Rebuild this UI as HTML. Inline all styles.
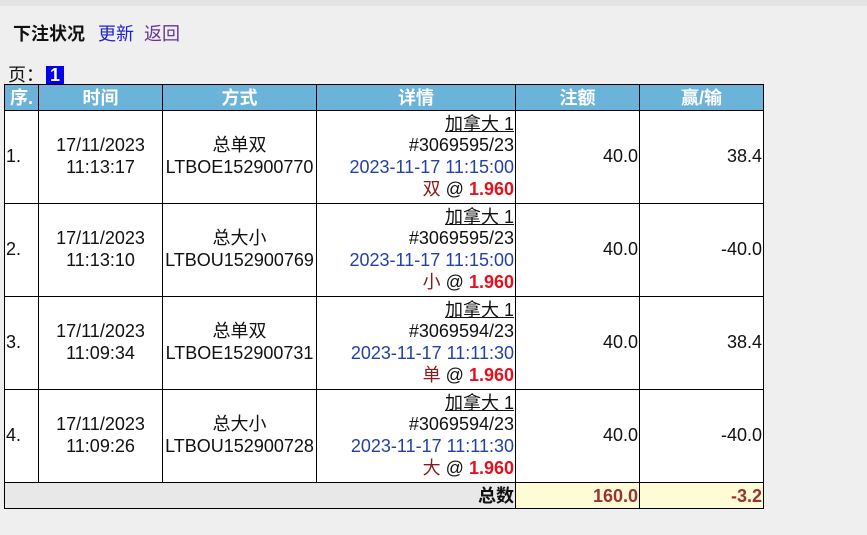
<!DOCTYPE html>
<html><head><meta charset="utf-8"><style>
body{margin:0;background:#efefef;font-family:"Liberation Sans","Noto Sans CJK SC",sans-serif;font-size:18px;color:#111;width:867px;height:535px;overflow:hidden;position:relative}
.top{position:absolute;left:0;top:0;width:867px;height:6px;background:#e4e4e4}
.title{position:absolute;left:13px;top:20px;font-size:18px}
.title b{color:#111;margin-right:8px}
.title a{text-decoration:none}
.pg{position:absolute;left:8px;top:61px}
.pg span{display:inline-block;background:#0000ee;color:#fff;font-weight:bold;padding:0 4px;line-height:19px;margin-left:2px}
table{position:absolute;left:4px;top:84px;border-collapse:collapse;table-layout:fixed}
td,th{border:1px solid #000;padding:0 1px;line-height:21.6px;white-space:nowrap;overflow:visible}
th{background:#6bb3d9;color:#fff;height:25px;font-weight:bold;font-size:18px;line-height:20px}
tr.r td{height:92px;background:#fff}
.c{text-align:center}.r2{text-align:right}
.blue{color:#2440a8}.dr{color:#8b1a1a}.red{color:#e8101e;font-weight:bold}
.tot td{height:25px;font-weight:bold;text-align:right;background:#fffbd5;color:#993333;line-height:20px}
.tot td.g{background:#e8e8e8;color:#111}
</style></head><body>
<div class="top"></div>
<div class="title"><b>下注状况</b> <a style="color:#2222cc">更新</a>&nbsp; <a style="color:#663399">返回</a></div>
<div class="pg">页：<span>1</span></div>
<table>
<colgroup><col style="width:34px"><col style="width:124px"><col style="width:154px"><col style="width:199px"><col style="width:124px"><col style="width:124px"></colgroup>
<tr><th>序.</th><th>时间</th><th>方式</th><th>详情</th><th>注额</th><th>赢/输</th></tr>
<tr class="r"><td>1.</td><td class="c">17/11/2023<br>11:13:17</td><td class="c">总单双<br>LTBOE152900770</td><td class="r2"><u>加拿大 1</u><br>#3069595/23<br><span class="blue">2023-11-17 11:15:00</span><br><span class="dr">双</span> @ <span class="red">1.960</span></td><td class="r2">40.0</td><td class="r2">38.4</td></tr>
<tr class="r"><td>2.</td><td class="c">17/11/2023<br>11:13:10</td><td class="c">总大小<br>LTBOU152900769</td><td class="r2"><u>加拿大 1</u><br>#3069595/23<br><span class="blue">2023-11-17 11:15:00</span><br><span class="dr">小</span> @ <span class="red">1.960</span></td><td class="r2">40.0</td><td class="r2">-40.0</td></tr>
<tr class="r"><td>3.</td><td class="c">17/11/2023<br>11:09:34</td><td class="c">总单双<br>LTBOE152900731</td><td class="r2"><u>加拿大 1</u><br>#3069594/23<br><span class="blue">2023-11-17 11:11:30</span><br><span class="dr">单</span> @ <span class="red">1.960</span></td><td class="r2">40.0</td><td class="r2">38.4</td></tr>
<tr class="r"><td>4.</td><td class="c">17/11/2023<br>11:09:26</td><td class="c">总大小<br>LTBOU152900728</td><td class="r2"><u>加拿大 1</u><br>#3069594/23<br><span class="blue">2023-11-17 11:11:30</span><br><span class="dr">大</span> @ <span class="red">1.960</span></td><td class="r2">40.0</td><td class="r2">-40.0</td></tr>
<tr class="tot"><td class="g" colspan="4">总数</td><td>160.0</td><td>-3.2</td></tr>
</table>
</body></html>
